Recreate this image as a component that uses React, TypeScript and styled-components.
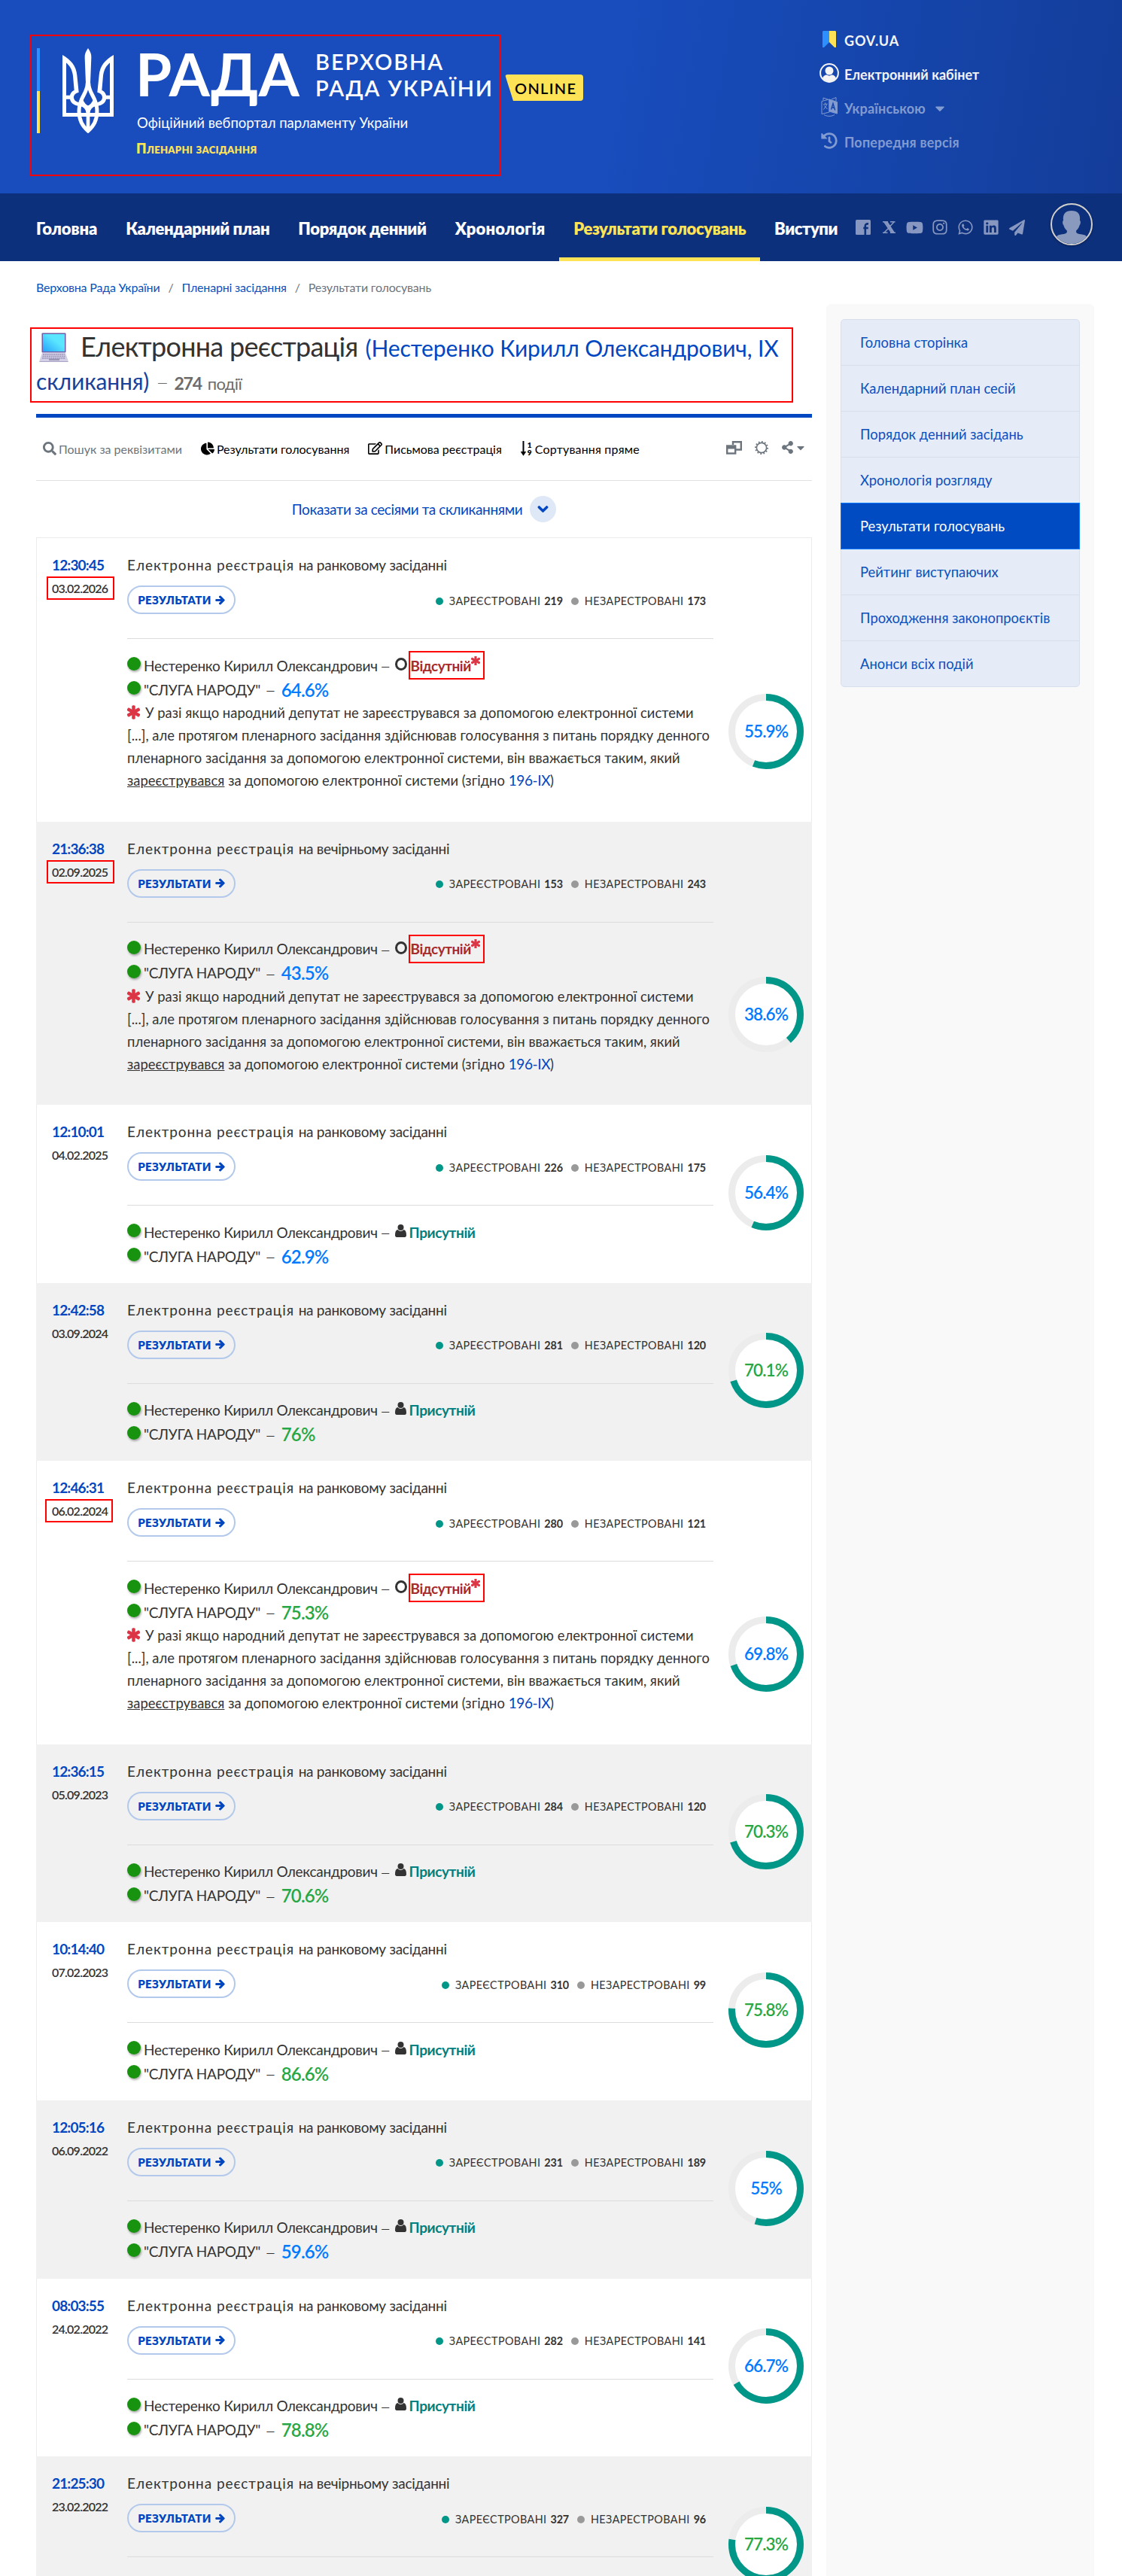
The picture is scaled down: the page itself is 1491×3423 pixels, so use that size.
import styled, { createGlobalStyle, css } from 'styled-components'
import {
  FaArrowRight, FaAsterisk, FaCaretDown, FaChartPie, FaChevronDown, FaHistory,
  FaInstagram, FaLinkedin, FaPaperPlane, FaRegEdit, FaSearch, FaShareAlt,
  FaWhatsapp, FaYoutube,
} from 'react-icons/fa'

const GlobalStyle = createGlobalStyle`
  * { box-sizing: border-box; }
  body {
    margin: 0;
    background: #fff;
    color: #333;
    font-family: Lato, 'Open Sans', sans-serif;
    font-size: 18px;
  }
  a { color: inherit; text-decoration: none; }
  svg { display: block; flex: none; }
`

const Page = styled.div`
  width: 1491px;
  height: 3423px;
  overflow: hidden;
`

const redFrame = css`
  border: 2px solid #f00;
`

/* ---------- header ---------- */

const Header = styled.header`
  height: 257px;
  display: flex;
  align-items: flex-start;
  color: #fff;
  background: linear-gradient(100deg, #194dbe 0%, #194dbe 52%, #1545ab 78%, #143d9a 100%);
`
const LogoBox = styled.a`
  ${redFrame}
  margin: 46px 0 0 39px;
  width: 627px;
  height: 188px;
  padding: 16px 8px;
  display: flex;
`
const FlagBar = styled.div`
  width: 6px;
  height: 113px;
  margin-right: 30px;
  background: linear-gradient(#2e8fff 0 57px, #ffe356 57px);
`
const BrandText = styled.div`
  margin-left: 25px;
`
const BrandRow = styled.div`
  display: flex;
  height: 70px;
  white-space: nowrap;
`
const BigName = styled.div`
  font-size: 78px;
  font-weight: 700;
  line-height: 56px;
  letter-spacing: 0.2px;
  width: 243px;
  padding: 6px 0 0 4px;
`
const FullName = styled.div`
  font-size: 29px;
  font-weight: 600;
  line-height: 35px;
  letter-spacing: 1.9px;
`
const Slogan = styled.div`
  margin: 17px 0 0 6px;
  font-size: 18.5px;
  line-height: 24px;
  letter-spacing: -0.03px;
`
const Section = styled.div`
  margin: 12px 0 0 5px;
  font-size: 18px;
  line-height: 20px;
  font-weight: 800;
  font-variant: small-caps;
  letter-spacing: 0.3px;
  color: #ffe356;
`
const Online = styled.div`
  margin: 99px 0 0 5px;
  width: 104px;
  height: 35px;
  padding-left: 13px;
  border-radius: 4px;
  background: #ffe356;
  clip-path: polygon(0 0, 100% 0, 100% 100%, 11px 100%);
  color: #000;
  font-size: 20px;
  font-weight: 600;
  line-height: 36px;
  letter-spacing: 1.3px;
`
const TopLinks = styled.div`
  margin-left: auto;
  width: 402px;
  padding-top: 31px;
`
const TopLink = styled.a<{ $muted?: boolean; $ls?: number }>`
  height: 45px;
  display: flex;
  align-items: center;
  color: ${p => (p.$muted ? '#829bd0' : '#f4f4f4')};
  font-weight: 700;
  letter-spacing: ${p => p.$ls || 0}px;
  & > i {
    width: 25px;
    margin: 0 8px 4px 0;
    display: flex;
    justify-content: center;
  }
  & > svg { margin-left: 9px; }
`

/* ---------- navigation ---------- */

const Nav = styled.nav`
  height: 90px;
  padding-left: 29px;
  display: flex;
  background: #0d307c;
  color: #fff;
`
const NavItem = styled.a<{ $active?: boolean; $ls: number }>`
  height: 90px;
  padding: 0 19px;
  line-height: 93px;
  font-size: 22px;
  font-weight: 800;
  white-space: nowrap;
  letter-spacing: ${p => p.$ls}px;
  ${p => p.$active && css`
    color: #ffe356;
    box-shadow: inset 0 -5px #ffe356;
  `}
`
const Social = styled.div`
  margin-left: -2px;
  display: flex;
  align-items: center;
  color: #8797c0;
  & > a {
    width: 34px;
    display: flex;
    justify-content: center;
  }
`
const Avatar = styled.div`
  width: 56px;
  height: 56px;
  margin: 13px 0 0 28px;
  flex: none;
  border-radius: 50%;
  border: 2px solid #d2d0cc;
  overflow: hidden;
  box-shadow: 0 1px 3px #0006;
`

/* ---------- page body ---------- */

const Crumbs = styled.div`
  padding: 23px 0 0 48px;
  height: 57px;
  display: flex;
  gap: 11px;
  font-size: 16px;
  line-height: 24px;
  letter-spacing: -0.19px;
  color: #6c757d;
  & > a { color: #0b51bd; }
`
const Columns = styled.div`
  display: flex;
  align-items: flex-start;
`
const Main = styled.main`
  width: 1031px;
  margin-left: 48px;
`
const TitleBox = styled.h1`
  ${redFrame}
  margin: 31px 0 0 -8px;
  width: 1014px;
  height: 100px;
  padding: 1px 6px 0;
  font-weight: 400;
  line-height: 45px;
  white-space: nowrap;
`
const TitleLine = styled.div<{ $h: number }>`
  height: ${p => p.$h}px;
  display: flex;
  align-items: baseline;
`
const TitleIcon = styled.span`
  align-self: flex-start;
  margin: 4px 15px 0 4px;
`
const TitleText = styled.span`
  font-size: 36px;
  letter-spacing: -0.72px;
  margin-right: 10px;
`
const TitleLink = styled.a<{ $dark?: boolean }>`
  font-size: 30px;
  letter-spacing: -0.13px;
  color: ${p => (p.$dark ? '#17419a' : '#0047c1')};
`
const Dash = styled.span<{ $tight?: boolean }>`
  margin: 0 ${p => (p.$tight ? '5px 0 3px' : '7px 0 6px')};
  font-size: 1.35em;
  font-weight: 300;
  line-height: 0;
  letter-spacing: 0;
`
const Count = styled.span`
  margin-left: 3px;
  font-size: 22px;
  letter-spacing: -0.7px;
  color: #6c6c6c;
  & > b { margin-right: 3px; letter-spacing: -1.2px; font-size: 23px; }
`
const Toolbar = styled.div`
  margin-top: 15px;
  height: 89px;
  padding: 0 7px 0 9px;
  border-top: 5px solid #0047c1;
  border-bottom: 1px solid #e2e2e2;
  display: flex;
  align-items: center;
  gap: 25px;
`
const Tool = styled.a<{ $muted?: boolean; $ls?: number }>`
  display: flex;
  align-items: center;
  gap: 3px;
  font-size: 16px;
  white-space: nowrap;
  letter-spacing: ${p => p.$ls || 0}px;
  color: ${p => (p.$muted ? '#6c757d' : '#000')};
  & > svg { margin-bottom: 2px; }
`
const ToolIcons = styled.div`
  margin: 0 0 4px auto;
  display: flex;
  align-items: center;
  gap: 17px;
  color: #6c757d;
  & > a { display: flex; align-items: center; gap: 1px; }
`
const ShowMore = styled.a`
  height: 75px;
  display: flex;
  align-items: center;
  justify-content: center;
  gap: 10px;
  font-size: 19px;
  letter-spacing: -0.4px;
  color: #0047c1;
  & > i {
    width: 35px;
    height: 35px;
    border-radius: 50%;
    background: #dfe8f7;
    display: flex;
    align-items: center;
    justify-content: center;
  }
  & path { stroke: currentColor; stroke-width: 40px; }
`

/* ---------- event list ---------- */

const List = styled.div`
  border: 1px solid #ececec;
`
const Event = styled.section<{ $tall: boolean }>`
  height: ${p => (p.$tall ? 376.6 : 236.56)}px;
  display: flex;
  &:nth-child(even) {
    background: #f1f1f1;
    margin: 0 -1px;
    padding: 0 1px;
  }
`
const When = styled.div`
  width: 120px;
  padding: 20px 0 0 20px;
`
const Time = styled.div`
  font-size: 19px;
  font-weight: 700;
  line-height: 31px;
  letter-spacing: -0.85px;
  color: #0047c1;
`
const DateText = styled.div<{ $marked?: boolean; $shift?: number }>`
  width: 90px;
  height: 31px;
  margin-left: ${p => -7 - (p.$shift || 0)}px;
  padding-left: ${p => 5 + (p.$shift || 0)}px;
  border: 2px solid ${p => (p.$marked ? '#f00' : 'transparent')};
  font-size: 16px;
  font-weight: 600;
  line-height: 27px;
  letter-spacing: -0.75px;
`
const Body = styled.div`
  width: 779px;
  padding-top: 20px;
`
const EventTitle = styled.div`
  line-height: 31px;
  height: 30px;
  font-size: 19px;
  letter-spacing: -0.27px;
  & > span { letter-spacing: 0.93px; margin-right: 1px; }
`
const Summary = styled.div`
  margin-top: 13px;
  padding: 0 10px 0 0;
  height: 71px;
  border-bottom: 1px solid #dcdcdc;
  display: flex;
  justify-content: space-between;
  align-items: flex-start;
`
const ResultsButton = styled.a`
  width: 144px;
  height: 38px;
  border: 2px solid #b3c9ec;
  border-radius: 19px;
  display: flex;
  align-items: center;
  justify-content: center;
  gap: 5px;
  color: #0047c1;
  font-size: 15px;
  font-weight: 800;
  letter-spacing: 0.4px;
  & path { stroke: currentColor; stroke-width: 40px; }
`
const Stats = styled.div`
  height: 40px;
  display: flex;
  align-items: center;
  font-size: 14.4px;
  letter-spacing: 0.4px;
  white-space: nowrap;
  & b { min-width: 23px; letter-spacing: -0.2px; margin-left: 5px; }
  & b:last-child { min-width: 0; }
`
const Dot = styled.i<{ $color: string }>`
  width: 10px;
  height: 10px;
  margin: 1px 8px 0 11px;
  border-radius: 50%;
  background: ${p => p.$color};
`
const Votes = styled.div`
  padding-top: 19px;
`
const Vote = styled.div`
  height: 32px;
  display: flex;
  align-items: center;
  font-size: 19px;
  letter-spacing: -0.26px;
  white-space: nowrap;
  & > svg { margin: 0 4px 4px 0; }
`
const GreenDot = styled.i`
  width: 18px;
  height: 18px;
  margin: 0 4px 4px 0;
  border-radius: 50%;
  background: #18930f;
  box-shadow: 1px 2px 3px #0005;
`
const Ring = styled.i`
  width: 16px;
  height: 17px;
  margin: 0 2px 3px 0;
  border: 3px solid #333;
  border-radius: 50%;
`
const Present = styled.b`
  color: #008080;
  letter-spacing: -0.4px;
`
const Absent = styled.b`
  ${redFrame}
  width: 101px;
  height: 38px;
  padding-left: 1px;
  display: flex;
  align-items: center;
  color: #a82a2a;
  letter-spacing: -0.5px;
  & > svg { margin-bottom: 13px; color: #dc3545; }
  & path { stroke: currentColor; stroke-width: 50px; }
`
const Percent = styled.span<{ $high: boolean }>`
  font-size: 24px;
  font-weight: 600;
  letter-spacing: -0.9px;
  color: ${p => (p.$high ? '#28a745' : '#007bff')};
`
const Note = styled.div`
  font-size: 18.4px;
  line-height: 30px;
  letter-spacing: 0.03px;
  white-space: nowrap;
  & > svg { display: inline-block; color: #dc3545; margin-right: 7px; vertical-align: -1px; overflow: visible; }
  & > a { color: #0047c1; font-size: 19px; letter-spacing: -0.4px; }
  & path { stroke: currentColor; stroke-width: 50px; }
`
const Chart = styled.div`
  margin-left: 20px;
  align-self: flex-end;
  height: 170px;
`

/* ---------- sidebar ---------- */

const Sidebar = styled.aside`
  width: 356px;
  height: 3019px;
  margin-left: 19px;
  padding: 20px 19px;
  border-radius: 6px 6px 0 0;
  background: #f9f9f9;
`
const SideItem = styled.a<{ $active?: boolean }>`
  display: block;
  height: 62px;
  margin-bottom: -1px;
  padding-left: 25px;
  border: 1px solid #d8dfec;
  background: #e5ebf7;
  color: #0b50bd;
  font-size: 18.4px;
  line-height: 61px;
  position: relative;
  &:first-child { border-radius: 5px 5px 0 0; }
  &:last-child { border-radius: 0 0 5px 5px; }
  ${p => p.$active && css`
    z-index: 1;
    background: #004bc1;
    border-color: #007bff;
    color: #fff;
  `}
`

/* ---------- drawings ---------- */

const Trident = () => (
  <svg width="68" height="113" viewBox="0 0 204 339" fill="none" stroke="#fff" strokeWidth="15">
    <path d="M7.500 44V265.500H196.500V44" />
    <path d="M0 27C34 46 55 72 58 108L65 176C52 179 45 187 45 196C45 208 56 216 73 218L68 232C42 228 29 215 29 196C29 182 37 172 47 168L42 110C39 86 29 68 12 56L0 50Z" fill="#fff" stroke="none" />
    <path d="M204 27C170 46 149 72 146 108L139 176C152 179 159 187 159 196C159 208 148 216 131 218L136 232C162 228 175 215 175 196C175 182 167 172 157 168L162 110C165 86 175 68 192 56L204 50Z" fill="#fff" stroke="none" />
    <path d="M12 196H34M192 196H170" />
    <path d="M102 0C111 14 116 24 115 38L111 140L102 165L93 140L89 38C88 24 93 14 102 0Z" fill="#fff" stroke="none" />
    <path d="M100 138C99 182 72 190 67 238C62 284 78 310 102 330C126 310 142 284 137 238C132 190 105 182 104 138" />
    <path d="M68 224C90 227 102 240 102 262V326M136 224C114 227 102 240 102 262" strokeWidth="14" />
    <path d="M76 208C82 222 92 232 102 236C112 232 122 222 128 208" strokeWidth="12" />
  </svg>
)

const Laptop = () => (
  <svg width="40" height="40" viewBox="0 0 40 40">
    <defs>
      <linearGradient id="screen" x1="1" y1="0" x2="0" y2="1">
        <stop offset="0.4" stopColor="#5ae6ff" />
        <stop offset="1" stopColor="#27a2fb" />
      </linearGradient>
    </defs>
    <rect x="3.500" y="0.500" width="32" height="26" rx="1" fill="#6e5ea6" />
    <rect x="5" y="2" width="29" height="23" fill="url(#screen)" />
    <path d="M4 27H35L38.500 37V39H0.500V37Z" fill="#d3cfe6" />
    <path d="M5 29H34M4.500 31.500H34.500M4 34H35" stroke="#9a93b8" strokeWidth="1.600" strokeDasharray="2 0.800" />
    <rect x="13" y="34.500" width="14" height="2.500" fill="#9d96b5" />
    <path d="M0.500 38.500H38.500" stroke="#aaa3c6" />
  </svg>
)

const Bookmark = () => (
  <svg width="18" height="22" viewBox="0 0 18 22">
    <path d="M1 0H9V15L2 22H0V1Z" fill="#2e8fff" />
    <path d="M9 0H17L18 1V22H16L9 15Z" fill="#ffe356" />
  </svg>
)

const Cabinet = () => (
  <svg width="26" height="26" viewBox="0 0 26 26">
    <circle cx="13" cy="13" r="11.900" fill="none" stroke="#f4f4f4" strokeWidth="2" />
    <circle cx="13" cy="10" r="5.500" fill="#f4f4f4" />
    <path d="M4 20C5 16.500 8 15 10 15.500C12 17 14 17 16 15.500C18 15 21 16.500 22 20C17 26 9 26 4 20Z" fill="#f4f4f4" />
  </svg>
)

const Language = () => (
  <svg width="22" height="26" viewBox="0 0 22 26" fill="none" stroke="currentColor">
    <path d="M1 5.500L11 3V20L1 22.500Z" />
    <path d="M11 3L21.500 6.500V22L11 19Z" fill="currentColor" />
    <path d="M3 4V1L9 3M14 3L20 0.500V5M4 23.500C8 26 14 26 18 23.500M3 10L8.500 9M5.500 7.500V9.500M8 9.500L3.500 16.500M4.500 11.500L8.500 16" />
    <path d="M13.500 16.500L16 8.500L18.700 17.500M14.500 13.500L17.800 14.500" stroke="#1545ab" strokeWidth="1.400" />
  </svg>
)

const Facebook = () => (
  <svg width="20" height="20" viewBox="0 0 20 20">
    <rect width="20" height="20" rx="1.500" fill="currentColor" />
    <path d="M12.800 20V8.500C12.800 6 14 5.200 17 5.400M10.300 11H16.800" fill="none" stroke="#0d307c" strokeWidth="2.600" />
  </svg>
)

const XLogo = () => (
  <svg width="17" height="16" viewBox="0 0 17 16" fill="none" stroke="currentColor" strokeWidth="1.500">
    <path d="M0 0.800H7M10 0.800H16.500M0 15.200H6.500M10 15.200H17M2 1L11.500 15M4 1L13.500 15M6 1L15 15M15 1L9.500 7M8 9L2 15" />
  </svg>
)

const Silhouette = () => (
  <svg width="52" height="52" viewBox="0 0 52 52" fill="#8a9abf">
    <path d="M26 8C34 8 38 12 37 21C38.500 22 38 26 36.500 27.500C35.500 32 33 33 32 35C32 39 35 38.500 44 40.500L50 46V52H2V46L8 40.500C17 38.500 20 39 20 35C19 33 16.500 32 15.500 27.500C14 26 13.500 22 15 21C14 12 18 8 26 8Z" />
  </svg>
)

const SortIcon = styled.span`
  display: flex;
  align-items: center;
  margin-bottom: 2px;
  & > span {
    width: 9px;
    padding-left: 2px;
    font-size: 10px;
    font-weight: 800;
    line-height: 10px;
  }
`

const SortDown = () => (
  <SortIcon>
    <svg width="7" height="20" viewBox="0 0 7 20">
      <path d="M3.500 0V16M1.500 15L3.500 18L5.500 15Z" fill="#000" stroke="#000" strokeWidth="2" />
    </svg>
    <span>1<br />9</span>
  </SortIcon>
)

const Windows = () => (
  <svg width="21" height="18" viewBox="0 0 21 18" fill="none" stroke="currentColor" strokeWidth="2.400">
    <path d="M9 5V1.200H19.800V11.500H13" />
    <rect x="1.200" y="6.500" width="11" height="10" />
    <path d="M1 8.500H12" strokeWidth="4" />
  </svg>
)

const Sun = () => (
  <svg width="18" height="18" viewBox="0 0 18 18" fill="none" stroke="currentColor">
    <circle cx="9" cy="9" r="6.600" strokeWidth="1.600" />
    <circle cx="9" cy="9" r="8" strokeWidth="2" pathLength="120" strokeDasharray="4 6" />
  </svg>
)

const Person = () => (
  <svg width="15" height="17" viewBox="0 0 15 17" fill="#333">
    <circle cx="7.500" cy="4" r="4" />
    <path d="M3.500 7C5.500 9.500 9.500 9.500 11.500 7C14 7.500 15 10 15 14.500C15 16 14 17 13 17H2C1 17 0 16 0 14.500C0 10 1 7.500 3.500 7Z" />
  </svg>
)

interface DonutProps {
  value: number;
}

const Donut = ({ value }: DonutProps) => (
  <svg width="100" height="100" viewBox="0 0 100 100">
    <circle cx="50" cy="50" r="45.500" fill="#fff" stroke="#ececec" strokeWidth="9" />
    <circle
      cx="50" cy="50" r="45.500" fill="none" stroke="#009688" strokeWidth="9"
      pathLength="100" strokeDasharray={`${value} 100`} transform="rotate(-90 50 50)"
    />
    <text
      x="50" y="58" textAnchor="middle" fontSize="22.500" fontWeight="600" letterSpacing="-0.900"
      fill={value >= 70 ? '#28a745' : '#007bff'}
    >
      {value}%
    </text>
  </svg>
)

/* ---------- data ---------- */

interface EventData {
  time: string;
  date: string;
  evening?: boolean;
  yes: number;
  no: number;
  total: number;
  party?: number;
  absent?: boolean;
  shift?: number;
}

const events: EventData[] = [
  { time: '12:30:45', date: '03.02.2026', yes: 219, no: 173, total: 55.9, party: 64.6, absent: true },
  { time: '21:36:38', date: '02.09.2025', evening: true, yes: 153, no: 243, total: 38.6, party: 43.5, absent: true },
  { time: '12:10:01', date: '04.02.2025', yes: 226, no: 175, total: 56.4, party: 62.9 },
  { time: '12:42:58', date: '03.09.2024', yes: 281, no: 120, total: 70.1, party: 76 },
  { time: '12:46:31', date: '06.02.2024', yes: 280, no: 121, total: 69.8, party: 75.3, absent: true, shift: 2 },
  { time: '12:36:15', date: '05.09.2023', yes: 284, no: 120, total: 70.3, party: 70.6 },
  { time: '10:14:40', date: '07.02.2023', yes: 310, no: 99, total: 75.8, party: 86.6 },
  { time: '12:05:16', date: '06.09.2022', yes: 231, no: 189, total: 55, party: 59.6 },
  { time: '08:03:55', date: '24.02.2022', yes: 282, no: 141, total: 66.7, party: 78.8 },
  { time: '21:25:30', date: '23.02.2022', evening: true, yes: 327, no: 96, total: 77.3 },
]

const nav: [string, number][] = [
  ['Головна', -0.15], ['Календарний план', -0.38], ['Порядок денний', -0.28],
  ['Хронологія', 0.1], ['Результати голосувань', -0.4], ['Виступи', -0.45],
]

const sideLinks = [
  'Головна сторінка', 'Календарний план сесій', 'Порядок денний засідань', 'Хронологія розгляду',
  'Результати голосувань', 'Рейтинг виступаючих', 'Проходження законопроєктів', 'Анонси всіх подій',
]

const EventRow = ({ e }: { e: EventData }) => (
  <Event $tall={!!e.absent}>
    <When>
      <Time>{e.time}</Time>
      <DateText $marked={e.absent} $shift={e.shift}>{e.date}</DateText>
    </When>
    <Body>
      <EventTitle>
        <span>Електронна реєстрація</span> на {e.evening ? 'вечірньому' : 'ранковому'} засіданні
      </EventTitle>
      <Summary>
        <ResultsButton>РЕЗУЛЬТАТИ <FaArrowRight size={13} /></ResultsButton>
        <Stats>
          <Dot $color="#009688" /> ЗАРЕЄСТРОВАНІ <b>{e.yes}</b>
          <Dot $color="#999" /> НЕЗАРЕСТРОВАНІ <b>{e.no}</b>
        </Stats>
      </Summary>
      {e.party && (
        <Votes>
          <Vote>
            <GreenDot />
            Нестеренко Кирилл Олександрович<Dash $tight>–</Dash>
            {e.absent
              ? <><Ring /><Absent>Відсутній<FaAsterisk size={12} /></Absent></>
              : <><Person /><Present>Присутній</Present></>}
          </Vote>
          <Vote>
            <GreenDot />
            "СЛУГА НАРОДУ"<Dash>–</Dash>
            <Percent $high={e.party >= 70}>{e.party}%</Percent>
          </Vote>
        </Votes>
      )}
      {e.absent && (
        <Note>
          <FaAsterisk size={17} />
          У разі якщо народний депутат не зареєструвався за допомогою електронної системи<br />
          [...], але протягом пленарного засідання здійснював голосування з питань порядку денного<br />
          пленарного засідання за допомогою електронної системи, він вважається таким, який<br />
          <u>зареєструвався</u> за допомогою електронної системи (згідно <a>196-IX</a>)
        </Note>
      )}
    </Body>
    <Chart><Donut value={e.total} /></Chart>
  </Event>
)

const App = () => {
  return (
    <Page>
      <GlobalStyle />
      <Header>
        <LogoBox>
          <FlagBar />
          <Trident />
          <BrandText>
            <BrandRow>
              <BigName>РАДА</BigName>
              <FullName>ВЕРХОВНА<br />РАДА УКРАЇНИ</FullName>
            </BrandRow>
            <Slogan>Офіційний вебпортал парламенту України</Slogan>
            <Section>Пленарні засідання</Section>
          </BrandText>
        </LogoBox>
        <Online>ONLINE</Online>
        <TopLinks>
          <TopLink $ls={0.84}><i><Bookmark /></i>GOV.UA</TopLink>
          <TopLink><i><Cabinet /></i>Електронний кабінет</TopLink>
          <TopLink $muted $ls={0.19}><i><Language /></i>Українською <FaCaretDown size={20} /></TopLink>
          <TopLink $muted $ls={0.21}><i><FaHistory size={22} /></i>Попередня версія</TopLink>
        </TopLinks>
      </Header>
      <Nav>
        {nav.map(([text, ls]) => (
          <NavItem key={text} $ls={ls} $active={text === 'Результати голосувань'}>{text}</NavItem>
        ))}
        <Social>
          <a><Facebook /></a>
          <a><XLogo /></a>
          <a><FaYoutube size={23} /></a>
          <a><FaInstagram size={22} /></a>
          <a><FaWhatsapp size={22} /></a>
          <a><FaLinkedin size={22} /></a>
          <a><FaPaperPlane size={21} /></a>
        </Social>
        <Avatar><Silhouette /></Avatar>
      </Nav>
      <Crumbs>
        <a>Верховна Рада України</a> / <a>Пленарні засідання</a> / <span>Результати голосувань</span>
      </Crumbs>
      <Columns>
        <Main>
          <TitleBox>
            <TitleLine $h={46}>
              <TitleIcon><Laptop /></TitleIcon>
              <TitleText>Електронна реєстрація</TitleText>
              <TitleLink>(Нестеренко Кирилл Олександрович, IX</TitleLink>
            </TitleLine>
            <TitleLine $h={45}>
              <TitleLink $dark>скликання)</TitleLink>
              <Count><Dash>–</Dash><b>274</b> події</Count>
            </TitleLine>
          </TitleBox>
          <Toolbar>
            <Tool $muted><FaSearch size={18} />Пошук за реквізитами</Tool>
            <Tool><FaChartPie size={18} />Результати голосування</Tool>
            <Tool><FaRegEdit size={19} />Письмова реєстрація</Tool>
            <Tool $ls={0.18}><SortDown />Сортування пряме</Tool>
            <ToolIcons>
              <a><Windows /></a>
              <a><Sun /></a>
              <a><FaShareAlt size={17} /><FaCaretDown size={16} /></a>
            </ToolIcons>
          </Toolbar>
          <ShowMore>Показати за сесіями та скликаннями <i><FaChevronDown size={15} /></i></ShowMore>
          <List>
            {events.map(e => <EventRow key={e.date} e={e} />)}
          </List>
        </Main>
        <Sidebar>
          {sideLinks.map(text => (
            <SideItem key={text} $active={text === 'Результати голосувань'}>{text}</SideItem>
          ))}
        </Sidebar>
      </Columns>
    </Page>
  )
}

export default App
